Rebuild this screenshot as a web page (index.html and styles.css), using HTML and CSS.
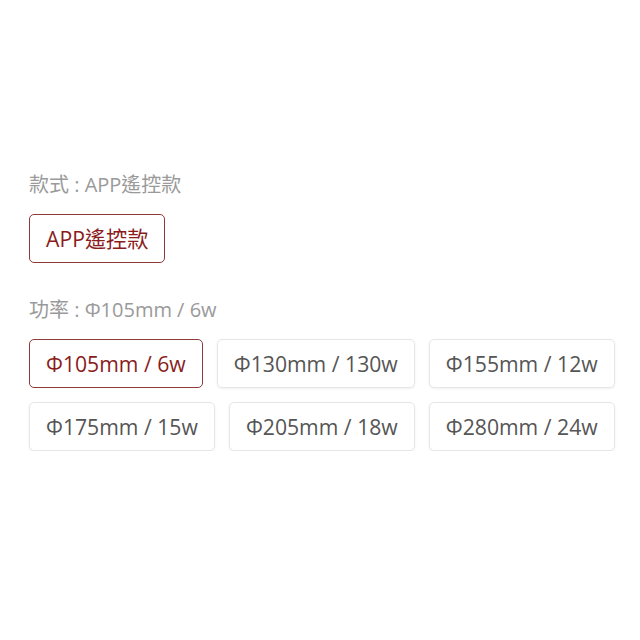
FILE: index.html
```html
<!DOCTYPE html>
<html lang="zh-Hant">
<head>
<meta charset="utf-8">
<title>商品規格</title>
<link rel="stylesheet" href="styles.css">
</head>
<body>
<div class="spec">
  <div class="spec-group">
    <div class="spec-label">款式 : APP遙控款</div>
    <div class="spec-options">
      <button class="opt is-active">APP遙控款</button>
    </div>
  </div>
  <div class="spec-group">
    <div class="spec-label">功率 : Φ105mm / 6w</div>
    <div class="spec-options">
      <button class="opt is-active">Φ105mm / 6w</button>
      <button class="opt">Φ130mm / 130w</button>
      <button class="opt">Φ155mm / 12w</button>
      <button class="opt">Φ175mm / 15w</button>
      <button class="opt">Φ205mm / 18w</button>
      <button class="opt">Φ280mm / 24w</button>
    </div>
  </div>
</div>
</body>
</html>
```
FILE: styles.css
```css
html, body {
  margin: 0;
  padding: 0;
  background: #fff;
}

body {
  font-family: "Open Sans", "Noto Sans CJK TC", sans-serif;
}

.spec {
  padding: 172px 6px 0 29px;
  display: flex;
  flex-direction: column;
  gap: 34px;
}

.spec-group {
  display: flex;
  flex-direction: column;
  gap: 16px;
}

.spec-label {
  font-size: 20px;
  line-height: 26px;
  color: #9a9a9a;
}

.spec-options {
  display: flex;
  flex-wrap: wrap;
  gap: 14px;
}

.opt {
  font-family: inherit;
  font-size: 21.2px;
  line-height: 27px;
  color: #555;
  background: #fff;
  border: 1px solid #e6e6e6;
  border-radius: 5px;
  padding: 10px 16px;
  box-shadow: 0 1px 3px rgba(0, 0, 0, 0.06);
}

.opt.is-active {
  color: #8a1c1c;
  border-color: #8e3a3a;
  box-shadow: none;
}
```
